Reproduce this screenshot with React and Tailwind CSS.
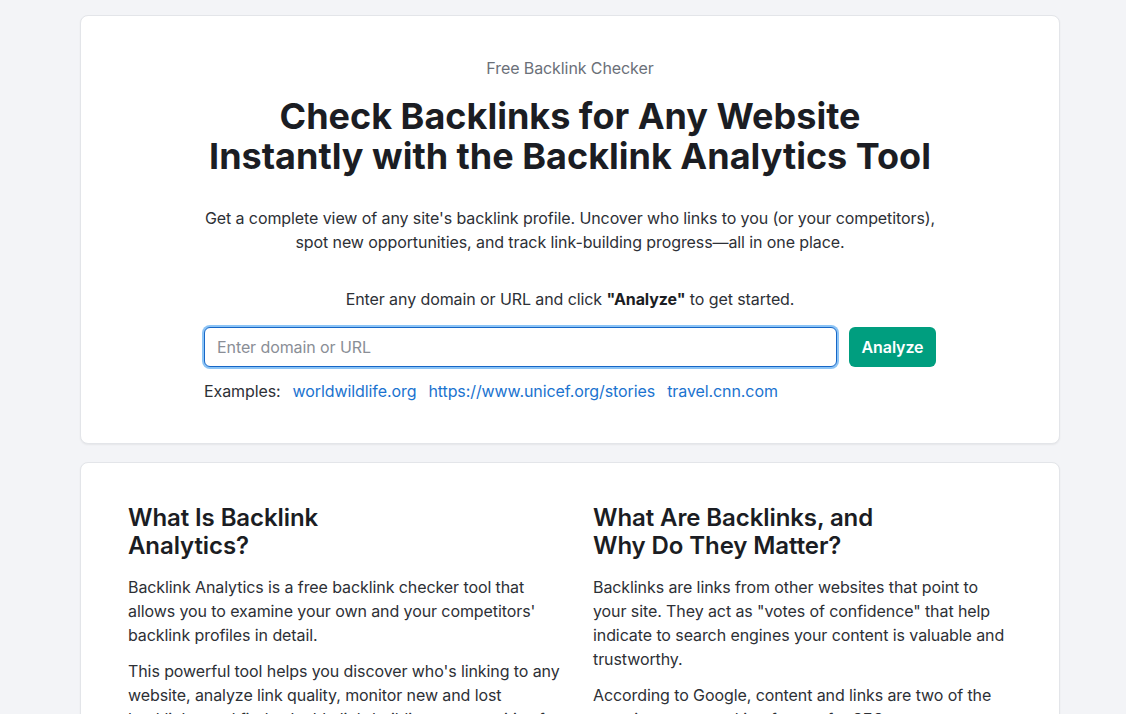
const font = { fontFamily: 'Inter, "Noto Sans", sans-serif' };

const examples = ['worldwildlife.org', 'https://www.unicef.org/stories', 'travel.cnn.com'];

function Hero() {
    return (
        <section className="rounded-lg border border-[#e3e5e9] bg-white px-12 pt-10 pb-10 shadow-[0_1px_2px_rgba(0,0,0,0.06)]">
            <p className="text-center text-base leading-6 text-[#6b7079]">Free Backlink Checker</p>
            <h1 className="mt-4 text-center text-4xl leading-10 font-bold tracking-normal text-[#1b1d23]">
                Check Backlinks for Any Website
                <br />
                Instantly with the Backlink Analytics Tool
            </h1>
            <p className="mx-auto mt-[30px] max-w-[740px] text-center text-base leading-6 text-[#2d3036]">
                Get a complete view of any site's backlink profile. Uncover who links to you (or your competitors), spot new opportunities, and track link-building progress—all in one place.
            </p>
            <p className="mt-[33px] text-center text-base leading-6 text-[#2d3036]">
                Enter any domain or URL and click <strong className="font-bold text-[#1b1d23]">"Analyze"</strong> to get started.
            </p>

            <div className="mx-auto mt-4 max-w-[732px]">
                <div className="flex gap-3">
                    <input
                        type="text"
                        placeholder="Enter domain or URL"
                        className="h-10 flex-1 rounded-md border border-[#1767c7] bg-white px-3 text-base tracking-[-0.09px] text-[#1b1d23] placeholder-[#8a8e96] shadow-[0_0_0_2px_#8cc4f6] outline-none"
                    />
                    <button type="button" className="h-10 rounded-md bg-[#009e7f] px-[12.5px] text-base font-semibold text-white">
                        Analyze
                    </button>
                </div>
                <div className="mt-3 flex items-center gap-3 text-base leading-6">
                    <span className="text-[#2d3036]">Examples:</span>
                    {examples.map(ex => (
                        <a key={ex} href="#" className="text-[#1b73cf]">{ex}</a>
                    ))}
                </div>
            </div>
        </section>
    );
}

function InfoColumn({ title, paragraphs }) {
    return (
        <div>
            <h2 className="text-2xl leading-7 font-semibold text-[#1b1d23]">{title}</h2>
            <div className="mt-[15px] space-y-3">
                {paragraphs.map((p, i) => (
                    <p key={i} className="text-base leading-6 text-[#2d3036]">{p}</p>
                ))}
            </div>
        </div>
    );
}

export default function App() {
    return (
        <div className="min-h-screen bg-[#f3f4f7] pt-[15px] pb-10 tracking-[-0.09px]" style={font}>
            <div className="ml-[80px] w-[980px]">
                <Hero />

                <section className="mt-[18px] rounded-lg border border-[#e3e5e9] bg-white pt-[41px] pb-10 pl-[47px] pr-[47px] shadow-[0_1px_2px_rgba(0,0,0,0.06)]">
                    <div className="grid grid-cols-[437px_419px] gap-[28px]">
                        <InfoColumn
                            title={<>What Is Backlink<br />Analytics?</>}
                            paragraphs={[
                                "Backlink Analytics is a free backlink checker tool that allows you to examine your own and your competitors' backlink profiles in detail.",
                                "This powerful tool helps you discover who's linking to any website, analyze link quality, monitor new and lost backlinks, and find valuable link-building opportunities for your own site.",
                            ]}
                        />
                        <InfoColumn
                            title={<>What Are Backlinks, and<br />Why Do They Matter?</>}
                            paragraphs={[
                                'Backlinks are links from other websites that point to your site. They act as "votes of confidence" that help indicate to search engines your content is valuable and trustworthy.',
                                'According to Google, content and links are two of the most important ranking factors for SEO.',
                            ]}
                        />
                    </div>
                </section>
            </div>
        </div>
    );
}
